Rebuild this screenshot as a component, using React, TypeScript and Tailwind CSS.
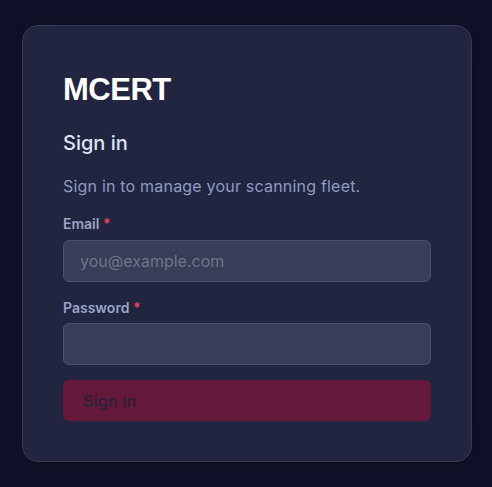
export default function App() {
  return (
    <div className="min-h-screen bg-[#11122a] pt-[25px] pl-[22px]" style={{ fontFamily: "Inter, 'Noto Sans', sans-serif" }}>
      <div className="w-[450px] rounded-2xl border border-[#363b57] bg-[#22253f] px-10 pt-[46px] pb-10 shadow-[0_0_24px_rgba(0,0,0,0.35)]">
        <h1 className="text-[31px] leading-9 font-bold tracking-[-0.5px] text-white" style={{ fontFamily: "'Liberation Sans', Arial, sans-serif" }}>MCERT</h1>
        <h2 className="mt-[21px] text-xl leading-7 font-medium text-[#dce3f3]">Sign in</h2>
        <p className="mt-[17px] text-base leading-6 tracking-[0.2px] text-[#8c9cc2]">Sign in to manage your scanning fleet.</p>
        <form className="mt-4 flex flex-col" onSubmit={(e) => e.preventDefault()}>
          <label className="text-sm leading-5 font-semibold text-[#97a5c7]">
            Email <span className="text-[#f43f5e]">*</span>
          </label>
          <input
            type="email"
            placeholder="you@example.com"
            className="mt-1.5 h-[42px] w-full rounded-md border border-[#4a5170] bg-[#373e57] px-4 text-base text-[#e2e8f0] placeholder:text-[#6e7588] outline-none"
          />
          <label className="mt-4 text-sm leading-5 font-semibold text-[#97a5c7]">
            Password <span className="text-[#f43f5e]">*</span>
          </label>
          <input
            type="password"
            className="mt-[5px] h-[42px] w-full rounded-md border border-[#4a5170] bg-[#373e57] px-4 text-base text-[#e2e8f0] outline-none"
          />
          <button
            type="submit"
            disabled
            className="mt-[15px] h-[41px] w-full rounded-md bg-[#64193a] px-5 text-left text-base font-medium tracking-[0.2px] text-[#28213d]"
          >
            Sign in
          </button>
        </form>
      </div>
    </div>
  );
}
